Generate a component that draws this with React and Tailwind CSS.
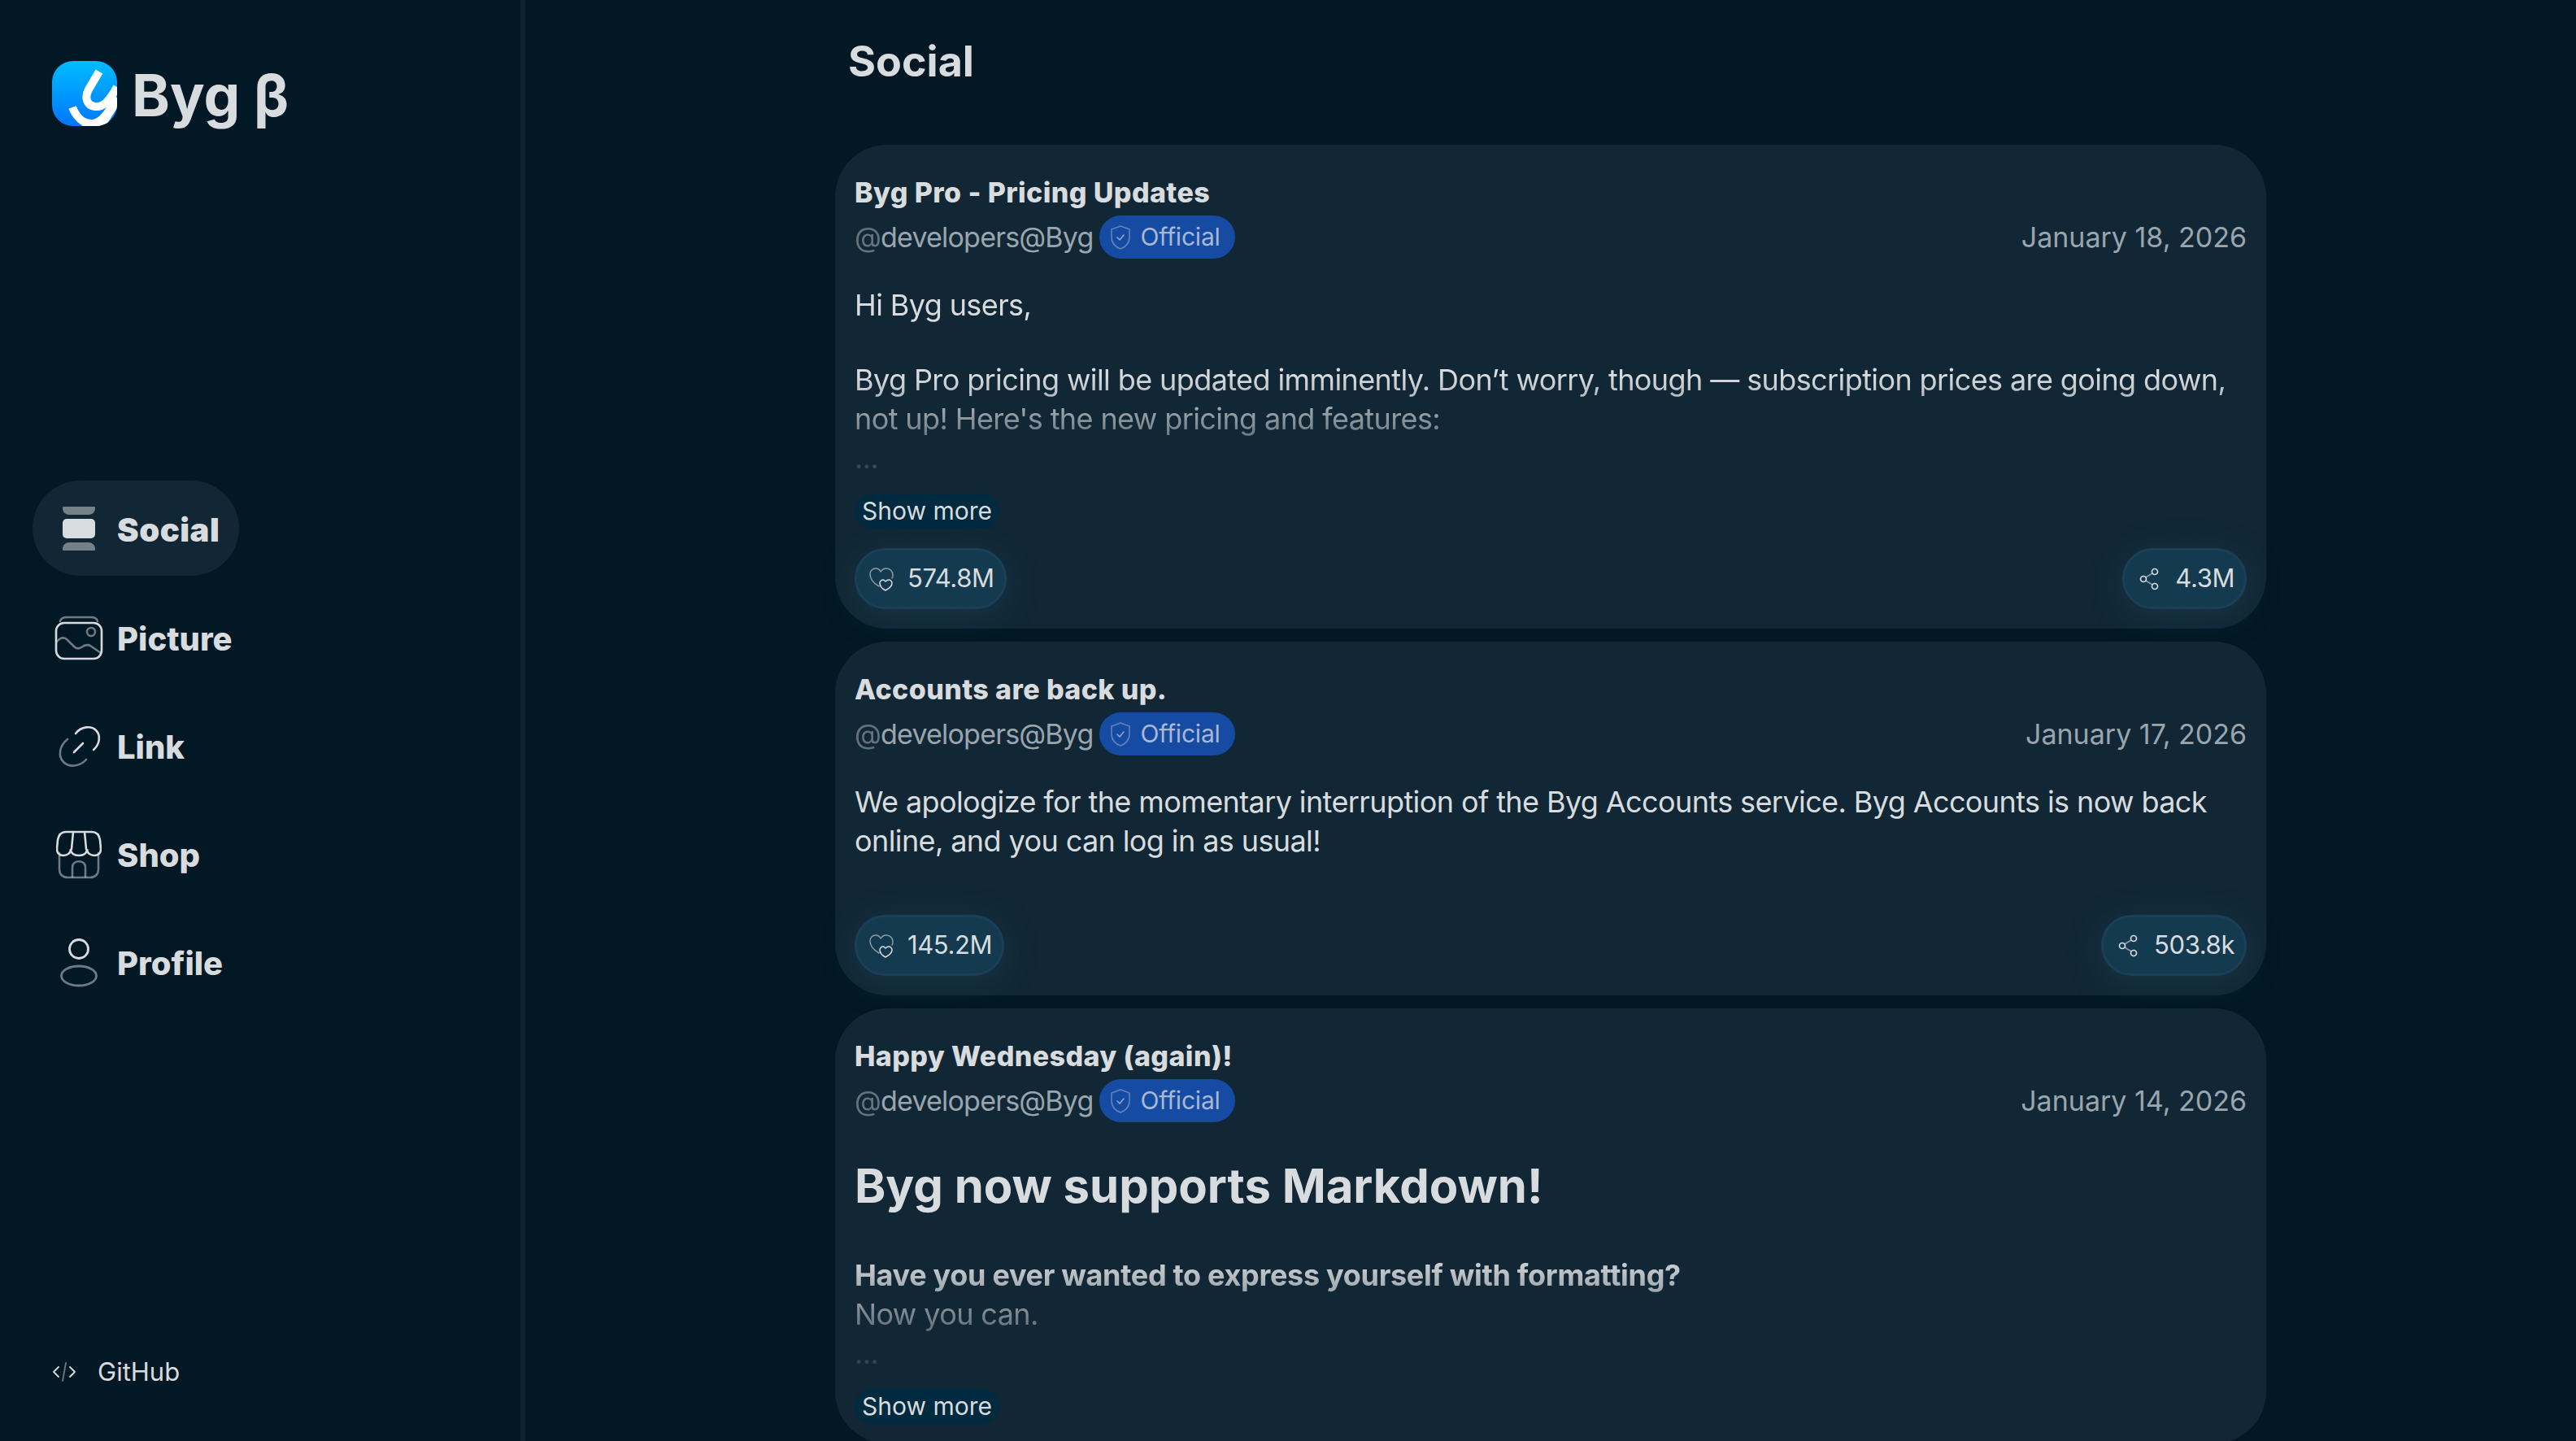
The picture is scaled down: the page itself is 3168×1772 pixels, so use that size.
const heading = "font-['Inter','Noto_Sans',sans-serif]";

function SocialIcon() {
  return (
    <svg width="56" height="56" viewBox="0 0 56 56" fill="#d9dcde">
      <path opacity=".5" d="M9 1h38c1 0 1 1 1 2 0 5-4 8-8 8H16c-4 0-8-3-8-8 0-1 0-2 1-2z" />
      <rect x="8" y="16" width="40" height="24" rx="5" />
      <path opacity=".5" d="M9 55h38c1 0 1-1 1-2 0-5-4-8-8-8H16c-4 0-8 3-8 8 0 1 0 2 1 2z" />
    </svg>
  );
}

function PictureIcon() {
  return (
    <svg width="60" height="56" viewBox="0 0 60 56" fill="none" stroke="#d9dcde" strokeWidth="2.6" strokeLinecap="round">
      <path opacity=".5" d="M7 7c1-4 4-5 8-5h30c4 0 7 1 8 5" />
      <rect x="2" y="9" width="56" height="44" rx="10" />
      <circle opacity=".5" cx="45" cy="20" r="5" />
      <path opacity=".5" d="M3 32c4-5 8-6 12-3l9 9c3 3 6 3 9 1 4-3 7-4 11-2l13 9" />
    </svg>
  );
}

function LinkIcon() {
  return (
    <svg width="56" height="56" viewBox="0 0 56 56" fill="none" stroke="#d9dcde" strokeWidth="2.6" strokeLinecap="round">
      <path d="M24 12C31 3 43 2 49 8c6 6 5 17-3 24" />
      <path opacity=".5" d="M14 19C4 27 2 40 9 47s20 6 28-3" />
      <path d="M22 35l11-11" />
    </svg>
  );
}

function ShopIcon() {
  return (
    <svg width="56" height="60" viewBox="0 0 56 60" fill="none" stroke="#d9dcde" strokeWidth="2.6" strokeLinecap="round">
      <path opacity=".5" d="M4 28v20c0 6 4 10 10 10h28c6 0 10-4 10-10V28" />
      <path opacity=".5" d="M20 57V45c0-9 16-9 16 0v12" />
      <path d="M12 2h32c6 0 9 4 10 10l1 11c0 5-3 8-8 8s-9-3-9-8c0 5-4 8-10 8s-10-3-10-8c0 5-4 8-9 8s-8-3-8-8l1-11C3 6 6 2 12 2z" />
      <path d="M19 23l2-21M37 23L35 2" />
    </svg>
  );
}

function ProfileIcon() {
  return (
    <svg width="50" height="60" viewBox="0 0 50 60" fill="none" stroke="#d9dcde" strokeWidth="2.8">
      <circle cx="25" cy="13" r="11.5" />
      <ellipse opacity=".5" cx="25" cy="46" rx="21.5" ry="12" />
    </svg>
  );
}

function Logo() {
  return (
    <svg width="80" height="80" viewBox="0 0 80 80" className="rounded-[26px]">
      <defs>
        <linearGradient id="logoBg" x1="0" y1="0" x2="0" y2="1">
          <stop offset="0" stopColor="#00bcff" />
          <stop offset="1" stopColor="#0076ff" />
        </linearGradient>
      </defs>
      <rect width="80" height="80" fill="url(#logoBg)" />
      <path d="M58 13L45 35c-5 9-3 20 8 21 10 1 17-6 27-24" fill="none" stroke="#fff" strokeWidth="10" />
      <path d="M25 57c4 10 12 20 24 20 12 0 20-13 31-32" fill="none" stroke="#fff" strokeWidth="10" />
      <path d="M36 80c4-3 10-4 16-3 10 0 18-10 28-28v9L66 80z" fill="#fff" />
    </svg>
  );
}

function ShieldIcon() {
  return (
    <svg width="28" height="32" viewBox="0 0 28 32" fill="none" stroke="#94a7c8" strokeWidth="1.6" strokeLinecap="round" strokeLinejoin="round">
      <path opacity=".6" d="M14 2l11 4v10c0 7-5 12-11 14C8 28 3 23 3 16V6z" />
      <path d="M10 16l3 3 5-6" />
    </svg>
  );
}

function HeartsIcon() {
  return (
    <svg width="32" height="32" viewBox="0 0 32 32" fill="none" stroke="#d9dcde" strokeWidth="1.5" strokeLinecap="round" strokeLinejoin="round">
      <path opacity=".6" d="M13 25C6 21 2 16 2 10c0-4 3-7 7-7 3 0 5 2 6 4 2-3 4-4 7-4 5 0 8 4 8 8 0 2 0 3-1 4" />
      <path d="M21 30c-4-2-7-5-7-9 0-2 2-4 4-4 1 0 2 1 3 2 1-1 2-2 4-2s4 2 4 4c0 4-4 7-8 9z" />
    </svg>
  );
}

function ShareIcon() {
  return (
    <svg width="24" height="28" viewBox="0 0 24 28" fill="none" stroke="#d9dcde" strokeWidth="1.7">
      <circle cx="19" cy="5" r="3.5" />
      <circle cx="5" cy="14" r="3.5" />
      <circle cx="19" cy="23" r="3.5" />
      <path opacity=".6" d="M8 12l8-5M8 16l8 5" />
    </svg>
  );
}

function CodeIcon() {
  return (
    <svg width="28" height="26" viewBox="0 0 28 26" fill="none" stroke="#d9dcde" strokeWidth="1.8" strokeLinecap="round" strokeLinejoin="round">
      <path d="M7 7l-6 6 6 6M21 7l6 6-6 6" />
      <path opacity=".5" d="M16 2l-4 22" />
    </svg>
  );
}

function NavItem({ icon, label, active }) {
  return (
    <div className={active ? "flex items-center h-[117px] w-[254px] rounded-full bg-[#112735]" : "flex items-center h-[117px] w-[254px] pt-[4px]"}>
      <div className="flex w-[104px] justify-center pl-[10px]">{icon}</div>
      <span className={`${heading} text-[40px] text-[#d9dcde] ${active ? "font-black pt-[4px] tracking-[0.5px]" : "font-extrabold pt-[3px]"}`}>{label}</span>
    </div>
  );
}

function Stat({ icon, value, spacing }) {
  return (
    <button className={`flex items-center h-[75px] rounded-[38px] border-[3px] border-[#1b3f58] bg-[#143a50] pr-[12px] text-[31px] tracking-[-0.4px] text-[#d9dcde] shadow-[0_8px_40px_rgba(40,80,100,0.35)] ${spacing}`}>
      {icon}
      <span>{value}</span>
    </button>
  );
}

function Card({ title, date, likes, shares, clampClass, children, gap }) {
  const body = "mt-[33px] text-[36px] leading-[48px] tracking-[-0.6px] text-[#d9dcde]";
  return (
    <article className="shrink-0 rounded-[64px] bg-[#112735] px-[24px] pt-[36px] pb-[24px]">
      <h2 className={`${heading} text-[34px] leading-[46px] tracking-[0.4px] font-extrabold text-[#d9dcde]`}>{title}</h2>
      <div className="mt-[5px] mb-[1px] flex h-[53px] items-center text-[34px]">
        <span className="tracking-[-0.8px] text-[#9aa5ad]">
          <span className="opacity-60">@</span>developers@Byg
        </span>
        <span className="ml-[8px] flex h-[53px] items-center gap-[10px] rounded-full bg-[#164ba3] pl-[12px] pr-[18px] text-[30px] tracking-[-0.2px] text-[#a9b8d2]">
          <ShieldIcon />
          Official
        </span>
        <span className="ml-auto text-[#9aa5ad]">{date}</span>
      </div>
      <div className={clampClass ? `${body} ${clampClass} overflow-hidden [mask-image:linear-gradient(to_bottom,black_45%,transparent_100%)]` : body}>
        {children}
      </div>
      {clampClass && (
        <div className="mt-[8px] flex">
          <button className="h-[43px] rounded-full bg-[#002a40] px-[9px] text-[30px] leading-[43px] text-[#d9dcde]">Show more</button>
        </div>
      )}
      {likes && (
        <div className={`flex items-center justify-between ${gap || "mt-[24px]"}`}>
          <Stat icon={<HeartsIcon />} value={likes} spacing="pl-[14px] gap-[16px]" />
          <Stat icon={<ShareIcon />} value={shares} spacing="pl-[18px] gap-[20px]" />
        </div>
      )}
    </article>
  );
}

const nav = [
  { label: "Social", icon: <SocialIcon />, active: true },
  { label: "Picture", icon: <PictureIcon /> },
  { label: "Link", icon: <LinkIcon /> },
  { label: "Shop", icon: <ShopIcon /> },
  { label: "Profile", icon: <ProfileIcon /> },
];

export default function App() {
  return (
    <div className="flex h-screen overflow-hidden bg-[#021824] font-['Inter',sans-serif]">
      <aside className="flex w-[646px] shrink-0 flex-col border-r-[6px] border-[#0f2230] pb-[62px] pl-[40px]">
        <div className="mt-[75px] flex h-[80px] items-center gap-[18px] pl-[24px]">
          <Logo />
          <span className={`${heading} pt-[4px] text-[71px] font-bold text-[#d9dcde]`}>Byg β</span>
        </div>
        <nav className="mt-[436px] flex flex-col gap-[16px]">
          {nav.map((n) => (
            <NavItem key={n.label} {...n} />
          ))}
        </nav>
        <div className="mt-auto flex items-center gap-[27px] pl-[25px] text-[31px] text-[#d9dcde]">
          <CodeIcon />
          GitHub
        </div>
      </aside>
      <main className="flex-1 overflow-hidden">
        <div className="ml-[381px] flex w-[1760px] flex-col gap-[16px]">
          <h1 className={`${heading} h-[162px] pl-[16px] pt-[46px] text-[52px] leading-[60px] font-bold text-[#d9dcde]`}>Social</h1>
          <Card title="Byg Pro - Pricing Updates" date="January 18, 2026" likes="574.8M" shares="4.3M" clampClass="h-[248px]">
            <p>Hi Byg users,</p>
            <p className="mt-[44px]">Byg Pro pricing will be updated imminently. Don’t worry, though — subscription prices are going down, not up! Here's the new pricing and features:</p>
            <p>...</p>
          </Card>
          <Card title="Accounts are back up." date="January 17, 2026" likes="145.2M" shares="503.8k" gap="mt-[67px]">
            <p>We apologize for the momentary interruption of the Byg Accounts service. Byg Accounts is now back online, and you can log in as usual!</p>
          </Card>
          <Card title="Happy Wednesday (again)!" date="January 14, 2026" clampClass="h-[287px]">
            <h3 className={`${heading} mt-[9px] text-[58px] leading-[72px] tracking-[0px] font-bold`}>Byg now supports Markdown!</h3>
            <p className="mt-[50px] font-bold tracking-[-0.3px]">Have you ever wanted to express yourself with formatting?</p>
            <p>Now you can.</p>
            <p>...</p>
          </Card>
        </div>
      </main>
    </div>
  );
}
